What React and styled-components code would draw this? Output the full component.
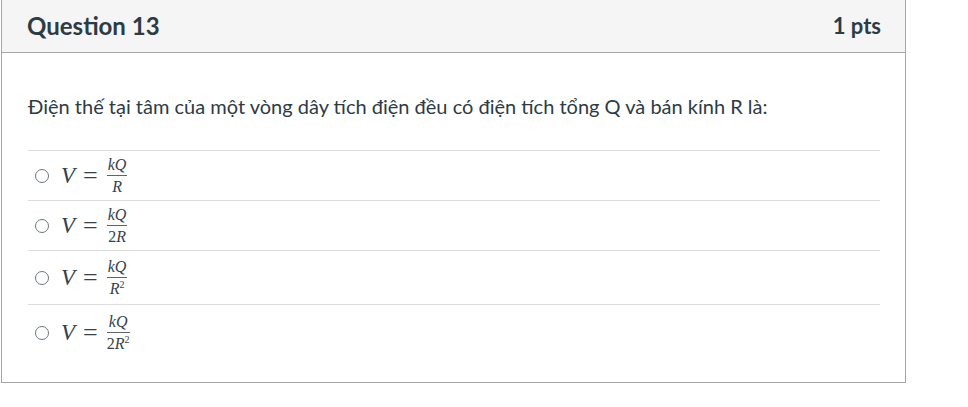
import React from 'react'
import styled, { createGlobalStyle } from 'styled-components'

const Global = createGlobalStyle`
  body {
    margin: 0;
    background: #fff;
    font-family: Lato, 'Noto Sans', sans-serif;
    color: #2d3b45;
  }
`

const Page = styled.div`
  width: 968px;
  height: 407px;
  overflow: hidden;
`

const Panel = styled.div`
  width: 903px;
  margin-left: 1px;
  border: 1px solid #a5a5a5;
  border-top: none;
  box-sizing: content-box;
`

const Header = styled.div`
  height: 53px;
  background: #f5f5f5;
  border-bottom: 1px solid #a5a5a5;
  display: flex;
  align-items: center;
  justify-content: space-between;
  padding: 0 24px 2px 25px;
  box-sizing: border-box;
`

const Title = styled.h2`
  margin: 0;
  font-size: 24px;
  font-weight: 700;
  color: #2d3b45;
`

const Points = styled.span`
  font-size: 22px;
  font-weight: 700;
  color: #2d3b45;
`

const Body = styled.div`
  padding: 39px 25px 22px 26px;
`

const Prompt = styled.p`
  margin: 0 0 30px;
  font-size: 20px;
  line-height: 28px;
`

const Answers = styled.div`
  display: flex;
  flex-direction: column;
`

const Answer = styled.label`
  display: flex;
  align-items: center;
  gap: 12px;
  height: ${p => p.h}px;
  border-top: 1px solid #dcdcdc;
  padding-left: 7px;
  box-sizing: border-box;
`

const Radio = styled.span`
  width: 12px;
  height: 12px;
  border: 1px solid #6b7780;
  border-radius: 50%;
  flex-shrink: 0;
`

const Math = styled.span`
  display: inline-flex;
  align-items: center;
  font-family: 'Liberation Serif', serif;
  color: #34424c;
`

const Var = styled.i`
  font-size: 23px;
`

const Eq = styled.span`
  margin: 0 9px 0 8px;
  font-size: 26px;
`

const Frac = styled.span`
  display: inline-flex;
  flex-direction: column;
  align-items: center;
  font-size: 16px;
  line-height: 14px;
`

const Num = styled.span`
  font-style: italic;
  padding: 0 1px 3px;
  border-bottom: 1px solid #5a666e;
  align-self: stretch;
  text-align: center;
`

const Den = styled.span`
  padding-top: 4px;
  i { font-style: italic; }
  sup { font-size: 10px; vertical-align: 6px; line-height: 0; }
`

const options = [
  { den: <><i>R</i></>, h: 50 },
  { den: <>2<i>R</i></>, h: 50 },
  { den: <><i>R</i><sup>2</sup></>, h: 54 },
  { den: <>2<i>R</i><sup>2</sup></>, h: 56 },
]

export default function App () {
  return (
    <Page>
      <Global />
      <Panel>
        <Header>
          <Title>Question 13</Title>
          <Points>1 pts</Points>
        </Header>
        <Body>
          <Prompt>Điện thế tại tâm của một vòng dây tích điện đều có điện tích tổng Q và bán kính R là:</Prompt>
          <Answers>
            {options.map((o, i) => (
              <Answer key={i} h={o.h}>
                <Radio />
                <Math>
                  <Var>V</Var>
                  <Eq>=</Eq>
                  <Frac>
                    <Num>kQ</Num>
                    <Den>{o.den}</Den>
                  </Frac>
                </Math>
              </Answer>
            ))}
          </Answers>
        </Body>
      </Panel>
    </Page>
  )
}
